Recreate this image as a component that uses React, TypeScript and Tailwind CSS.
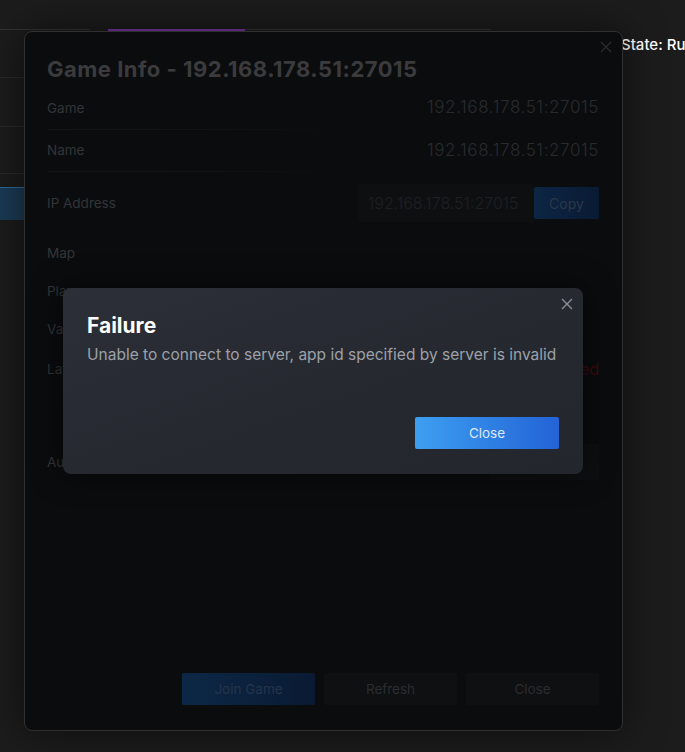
import React from "react";

function XIcon({ className }: { className?: string }) {
  return (
    <svg viewBox="0 0 12 12" className={className} fill="none" stroke="currentColor" strokeWidth="1.3">
      <path d="M1 1L11 11M11 1L1 11" />
    </svg>
  );
}

function Row({ label, value, h, valueClass }: { label: string; value?: string; h: string; valueClass?: string }) {
  return (
    <div className={`flex items-center justify-between ${h}`}>
      <span className="text-[13.5px] text-[#333538]">{label}</span>
      {value && (
        <span className={`whitespace-nowrap ${valueClass ?? "text-[17px] tracking-[0.6px] text-[#2a2b2e] font-light"}`}>{value}</span>
      )}
    </div>
  );
}

function Sep() {
  return <div className="h-px w-[300px] bg-gradient-to-r from-[#141517] via-[#121315] to-transparent" />;
}

export default function App() {
  return (
    <div className="relative w-[685px] h-[752px] overflow-hidden bg-[#1c1c1c] font-['Inter','Liberation_Sans',sans-serif]">
      {/* background page */}
      <div className="flex">
        <div className="w-[600px] shrink-0 flex flex-col">
          <div className="h-[29px]" />
          <div className="flex items-start h-[3px]">
            <div className="w-[90px] h-px bg-[#343434]" />
            <div className="w-[18px]" />
            <div className="w-[137px] h-[3px] bg-[#7d36a6]" />
            <div className="w-[246px] h-px bg-[#343434]" />
          </div>
          <div className="w-[300px] flex flex-col">
            <div className="h-[46px] border-b border-[#2b2b2b]" />
            <div className="h-[49px] border-b border-[#2b2b2b]" />
            <div className="h-[47px] border-b border-[#2b2b2b]" />
            <div className="h-[13px]" />
            <div className="h-[33px] bg-[#1b3a55] border-t border-[#2d6a9a]" />
          </div>
        </div>
        <div className="shrink-0 pt-[35px] pl-[21px] text-white text-[15px] leading-[20px] font-medium whitespace-nowrap">State: Running</div>
      </div>

      {/* Game Info dialog (dimmed) */}
      <div className="absolute left-[24px] top-[31px] w-[599px] h-[700px] rounded-[8px] border border-[#303030] bg-[#0b0c0e] shadow-[0_0_40px_rgba(0,0,0,0.55)] flex flex-col pl-[22px] pr-[23px] pt-[23px] pb-[25px]">
        <XIcon className="absolute right-[10px] top-[9px] w-[12px] h-[12px] text-[#2c2c2e]" />
        <h1 className="text-[22px] leading-[28px] tracking-[0.5px] font-bold text-[#3b3b3d] whitespace-nowrap">Game Info - 192.168.178.51:27015</h1>
        <div className="h-[4px]" />
        <Row label="Game" value="192.168.178.51:27015" h="h-[42px]" />
        <Sep />
        <Row label="Name" value="192.168.178.51:27015" h="h-[41px]" />
        <Sep />
        <div className="flex items-center justify-between h-[62px]">
          <span className="text-[13.5px] text-[#333538]">IP Address</span>
          <div className="flex items-center">
            <div className="w-[176px] h-[38px] bg-[#0e0f11] flex items-center px-[10px] text-[16px] font-light text-[#1f2023] whitespace-nowrap">192.168.178.51:27015</div>
            <div className="w-[65px] h-[32px] rounded-[2px] bg-gradient-to-r from-[#0c2644] to-[#0a1a33] flex items-center justify-center text-[14px] text-[#2b3848]">Copy</div>
          </div>
        </div>
        <Row label="Map" h="h-[38px]" />
        <Row label="Players" h="h-[38px]" />
        <Row label="Valve Anti-Cheat" h="h-[38px]" />
        <Row label="Latency" value="Connection failed" h="h-[42px]" valueClass="text-[16px] text-[#3e0a0a]" />
        <div className="h-[54px]" />
        <div className="flex items-center justify-between h-[36px]">
          <span className="text-[13.5px] text-[#333538]">Auto-refresh</span>
          <div className="w-[110px] h-[36px] bg-[#0e0f11]" />
        </div>
        <div className="mt-auto flex justify-end gap-[9px]">
          <div className="w-[133px] h-[32px] rounded-[2px] bg-gradient-to-r from-[#0c2846] to-[#0a1a33] flex items-center justify-center text-[13.5px] text-[#26354a]">Join Game</div>
          <div className="w-[133px] h-[32px] rounded-[2px] bg-[#0f1012] flex items-center justify-center text-[13.5px] text-[#2b2c2f]">Refresh</div>
          <div className="w-[133px] h-[32px] rounded-[2px] bg-[#0f1012] flex items-center justify-center text-[13.5px] text-[#2b2c2f]">Close</div>
        </div>
      </div>

      {/* Failure dialog */}
      <div className="absolute left-[63px] top-[288px] w-[520px] h-[186px] rounded-[8px] bg-gradient-to-br from-[#2c2f37] via-[#262930] to-[#23262d] shadow-[0_0_30px_rgba(0,0,0,0.6)] flex flex-col pl-[24px] pr-[24px] pt-[24px] pb-[25px]">
        <XIcon className="absolute right-[10px] top-[10px] w-[12px] h-[12px] text-[#8d929b]" />
        <h2 className="text-[21px] leading-[28px] font-bold text-white">Failure</h2>
        <p className="mt-[3px] text-[15.5px] leading-[24px] text-[#9ca1a9] whitespace-nowrap">Unable to connect to server, app id specified by server is invalid</p>
        <div className="mt-auto flex justify-end">
          <div className="w-[144px] h-[32px] rounded-[2px] bg-gradient-to-r from-[#3e9ff1] to-[#2562d6] flex items-center justify-center text-[13.5px] text-[#dde8f6]">Close</div>
        </div>
      </div>
    </div>
  );
}
